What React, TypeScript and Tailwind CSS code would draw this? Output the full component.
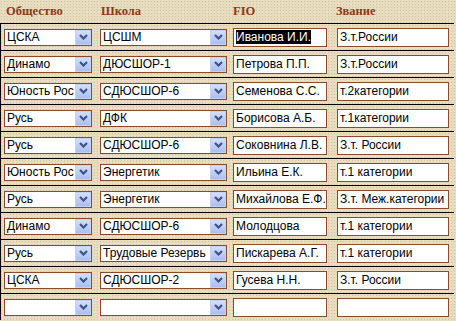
type Row = {
  club: string
  school: string
  fio: string
  rank: string
}

const rows: Row[] = [
  { club: 'ЦСКА', school: 'ЦСШМ', fio: 'Иванова И.И.', rank: 'З.т.России' },
  { club: 'Динамо', school: 'ДЮСШОР-1', fio: 'Петрова П.П.', rank: 'З.т.России' },
  { club: 'Юность Рос', school: 'СДЮСШОР-6', fio: 'Семенова С.С.', rank: 'т.2категории' },
  { club: 'Русь', school: 'ДФК', fio: 'Борисова А.Б.', rank: 'т.1категории' },
  { club: 'Русь', school: 'СДЮСШОР-6', fio: 'Соковнина Л.В.', rank: 'З.т. России' },
  { club: 'Юность Рос', school: 'Энергетик', fio: 'Ильина Е.К.', rank: 'т.1 категории' },
  { club: 'Русь', school: 'Энергетик', fio: 'Михайлова Е.Ф.', rank: 'З.т. Меж.категории' },
  { club: 'Динамо', school: 'СДЮСШОР-6', fio: 'Молодцова', rank: 'т.1 категории' },
  { club: 'Русь', school: 'Трудовые Резервь', fio: 'Пискарева А.Г.', rank: 'т.1 категории' },
  { club: 'ЦСКА', school: 'СДЮСШОР-2', fio: 'Гусева Н.Н.', rank: 'З.т. России' },
  { club: '', school: '', fio: '', rank: '' },
]

function Select({ value, width }: { value: string; width: string }) {
  return (
    <div className={`${width} h-[17px] flex bg-white border border-[#8e4a28] overflow-hidden`}>
      <div className="flex-1 min-w-0 pl-[2px] text-[12px] leading-[15px] text-black whitespace-nowrap overflow-hidden">
        {value}
      </div>
      <div className="w-[16px] h-[15px] shrink-0 flex items-center justify-center bg-gradient-to-b from-[#d3defa] to-[#aabff0] border border-[#c4d2f5]">
        <svg width="9" height="6" viewBox="0 0 9 6">
          <path d="M1 1 L4.5 4.5 L8 1" fill="none" stroke="#3f5288" strokeWidth="2.2" />
        </svg>
      </div>
    </div>
  )
}

function Input({ value, width, selected }: { value: string; width: string; selected?: boolean }) {
  return (
    <div className={`${width} h-[19px] bg-white border border-[#8e4a28] pl-[2px] text-[12px] leading-[16px] text-black whitespace-nowrap overflow-hidden`}>
      {selected ? <span className="bg-black text-white">{value}</span> : value}
    </div>
  )
}

export default function App() {
  return (
    <div
      className="w-[456px] h-[321px] overflow-hidden bg-[#e6dbbd] bg-[radial-gradient(#d3c49f_0.6px,transparent_0.8px),radial-gradient(#efe6cc_0.6px,transparent_0.8px)] bg-[length:3px_3px,4px_4px] bg-[position:0_0,1px_2px]"
      style={{ fontFamily: '"Liberation Sans", Arial, sans-serif' }}
    >
      <div
        className="h-[23px] grid grid-cols-[96px_133px_102px_125px] items-center text-[12.5px] font-bold text-[#8e3a16]"
        style={{ fontFamily: '"Liberation Serif", "Times New Roman", serif' }}
      >
        <div className="pl-[6px]">Общество</div>
        <div className="pl-[5px]">Школа</div>
        <div className="pl-[4px]">FIO</div>
        <div className="pl-[5px]">Звание</div>
      </div>
      {rows.map((r, i) => (
        <div
          key={i}
          className="w-[454px] h-[27px] border-t border-l border-black grid grid-cols-[95px_133px_102px_124px] items-center"
        >
          <div className="pl-[3px]">
            <Select value={r.club} width="w-[88px]" />
          </div>
          <div className="pl-[4px]">
            <Select value={r.school} width="w-[127px]" />
          </div>
          <div className="pl-[4px]">
            <Input value={r.fio} width="w-[94px]" selected={i === 0} />
          </div>
          <div className="pl-[6px]">
            <Input value={r.rank} width="w-[112px]" />
          </div>
        </div>
      ))}
    </div>
  )
}
